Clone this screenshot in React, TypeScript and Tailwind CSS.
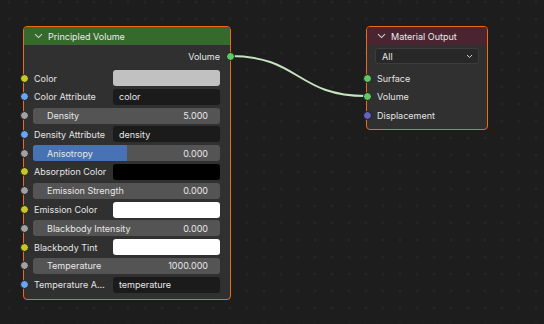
import React from 'react'

// ─── Blender-style shader node editor ─────────────────────────────
// Two nodes (Principled Volume → Material Output) on a dotted canvas.

type Row =
  | { kind: 'field'; label: string; socket: string; value: string }
  | { kind: 'swatch'; label: string; socket: string; color: string }
  | { kind: 'slider'; label: string; socket: string; value: string; fill?: number }

const YELLOW = '#c7c729'
const BLUE = '#6aa6f0'
const GRAY = '#a1a1a1'
const GREEN = '#63c763'
const PURPLE = '#6363c7'

const rows: Row[] = [
  { kind: 'swatch', label: 'Color', socket: YELLOW, color: '#c1c1c1' },
  { kind: 'field', label: 'Color Attribute', socket: BLUE, value: 'color' },
  { kind: 'slider', label: 'Density', socket: GRAY, value: '5.000' },
  { kind: 'field', label: 'Density Attribute', socket: BLUE, value: 'density' },
  { kind: 'slider', label: 'Anisotropy', socket: GRAY, value: '0.000', fill: 0.5 },
  { kind: 'swatch', label: 'Absorption Color', socket: YELLOW, color: '#000000' },
  { kind: 'slider', label: 'Emission Strength', socket: GRAY, value: '0.000' },
  { kind: 'swatch', label: 'Emission Color', socket: YELLOW, color: '#ffffff' },
  { kind: 'slider', label: 'Blackbody Intensity', socket: GRAY, value: '0.000' },
  { kind: 'swatch', label: 'Blackbody Tint', socket: YELLOW, color: '#ffffff' },
  { kind: 'slider', label: 'Temperature', socket: GRAY, value: '1000.000' },
  { kind: 'field', label: 'Temperature A…', socket: BLUE, value: 'temperature' },
]

function Socket({ color, side }: { color: string; side: 'left' | 'right' }) {
  return (
    <span
      className={
        side === 'left'
          ? 'absolute left-[-13.5px] top-[3.5px] w-[9px] h-[9px] rounded-full border border-[#1a1a1a]'
          : 'absolute right-[-14.5px] top-[3.5px] w-[9px] h-[9px] rounded-full border border-[#1a1a1a]'
      }
      style={{ backgroundColor: color }}
    />
  )
}

function Chevron() {
  return (
    <svg width="9" height="6" viewBox="0 0 9 6" className="shrink-0">
      <path d="M1 1.2 L4.5 4.6 L8 1.2" fill="none" stroke="#d0d0d0" strokeWidth="1.1" />
    </svg>
  )
}

function NodeRow({ row }: { row: Row }) {
  if (row.kind === 'slider') {
    return (
      <div className="relative h-4">
        <Socket color={row.socket} side="left" />
        <div className="relative h-4 rounded-[3px] bg-[#545454] overflow-hidden flex items-center justify-between pl-[14px] pr-[12px]">
          {row.fill !== undefined && (
            <div className="absolute left-0 top-0 bottom-0 bg-[#4772b3]" style={{ width: `${row.fill * 100}%` }} />
          )}
          <span className="relative text-[#e8e8e8]">{row.label}</span>
          <span className="relative text-[#e8e8e8]">{row.value}</span>
        </div>
      </div>
    )
  }
  return (
    <div className="relative h-4 flex items-center">
      <Socket color={row.socket} side="left" />
      <span className="w-[80px] shrink-0 pl-[1px] whitespace-nowrap text-[#e4e4e4]">{row.label}</span>
      {row.kind === 'swatch' ? (
        <div className="flex-1 h-4 rounded-[3px]" style={{ backgroundColor: row.color }} />
      ) : (
        <div className="flex-1 h-4 rounded-[3px] bg-[#1b1b1b] flex items-center pl-[6px] text-[#e8e8e8]">
          {row.value}
        </div>
      )}
    </div>
  )
}

export default function App() {
  return (
    <div
      className="relative w-[544px] h-[324px] overflow-hidden bg-[#1d1d1d] bg-[radial-gradient(circle,#2a2a2a_0.9px,transparent_1.3px)] bg-[length:17px_17px] bg-[position:0.5px_-6.5px] text-[9px] leading-none"
      style={{ fontFamily: 'Inter, "Noto Sans", sans-serif' }}
    >
      {/* node link */}
      <svg className="absolute inset-0" width="544" height="324">
        <path d="M230 56 C 300 56, 296 96, 366 96" fill="none" stroke="#c6e3bf" strokeWidth="2" />
      </svg>

      {/* Principled Volume */}
      <div className="absolute left-[23px] top-[26px] w-[208px] rounded-[4px] border border-[#ee6a14] bg-[#303030]">
        <div className="h-[18px] rounded-t-[3px] bg-[#356a2c] flex items-center gap-[5px] pl-[10px] text-[#ebebeb]">
          <Chevron />
          <span>Principled Volume</span>
        </div>
        <div className="pt-[3px] pb-[6px] pl-[9px] pr-[10px]">
          <div className="relative h-4 flex items-center justify-end text-[#e8e8e8]">
            <span>Volume</span>
            <Socket color={GREEN} side="right" />
          </div>
          <div className="mt-[6px] flex flex-col gap-[2.8px]">
            {rows.map((r) => (
              <NodeRow key={r.label} row={r} />
            ))}
          </div>
        </div>
      </div>

      {/* Material Output */}
      <div className="absolute left-[366px] top-[26px] w-[122px] rounded-[4px] border border-[#ee6a14] bg-[#303030]">
        <div className="h-[18px] rounded-t-[3px] bg-[#4a2531] flex items-center gap-[5px] pl-[10px] text-[#ebebeb]">
          <Chevron />
          <span>Material Output</span>
        </div>
        <div className="pt-[3px] pb-[6px] pl-[8px] pr-[8px]">
          <div className="h-4 rounded-[3px] border border-[#3c3c3c] bg-[#282828] flex items-center justify-between pl-[6px] pr-[5px] text-[#e8e8e8]">
            <span>All</span>
            <svg width="7" height="5" viewBox="0 0 7 5">
              <path d="M1 1 L3.5 3.5 L6 1" fill="none" stroke="#cfcfcf" strokeWidth="1" />
            </svg>
          </div>
          <div className="mt-[6px] flex flex-col gap-[2.5px] pl-[2px] text-[#e4e4e4]">
            {[
              { label: 'Surface', c: GREEN },
              { label: 'Volume', c: GREEN },
              { label: 'Displacement', c: PURPLE },
            ].map((s) => (
              <div key={s.label} className="relative h-4 flex items-center">
                <span
                  className="absolute left-[-14.5px] top-[3.5px] w-[9px] h-[9px] rounded-full border border-[#1a1a1a]"
                  style={{ backgroundColor: s.c }}
                />
                <span>{s.label}</span>
              </div>
            ))}
          </div>
        </div>
      </div>
    </div>
  )
}
